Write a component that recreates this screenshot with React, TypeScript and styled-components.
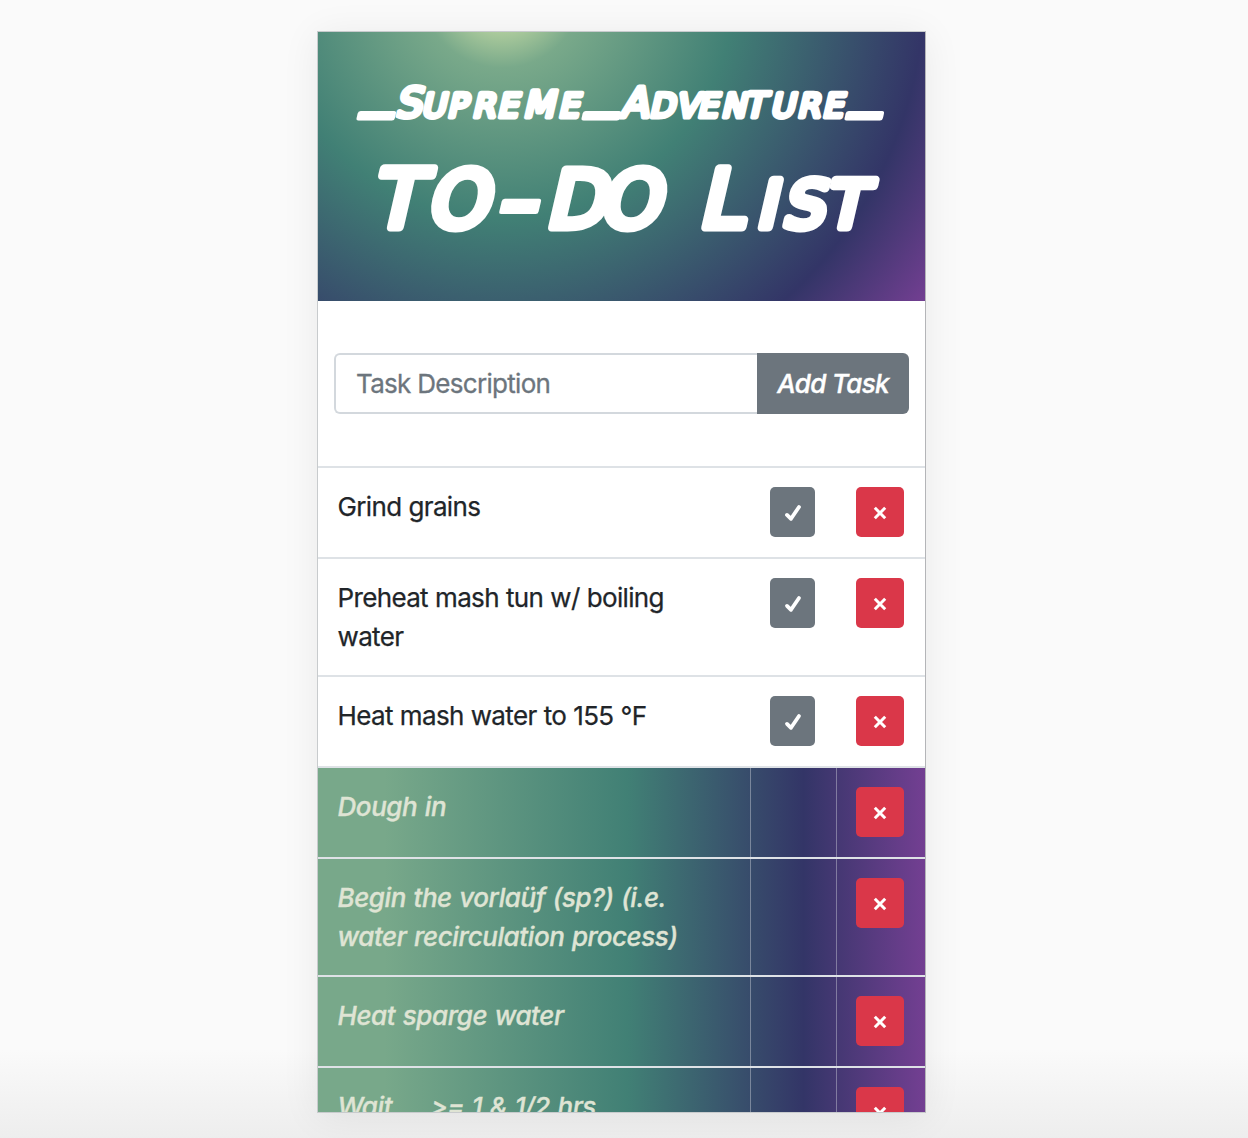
import React from "react";
import styled, { createGlobalStyle, css } from "styled-components";

const Global = createGlobalStyle`
  *, *::before, *::after { box-sizing: border-box; }
  html, body { margin: 0; padding: 0; height: 1138px; overflow: hidden; }
  body { background: #fafafa; font-family: Inter, "Liberation Sans", sans-serif; }
`;

const Page = styled.main`
  height: 1138px;
  padding: 31px 322px 25px 317px;
  background: linear-gradient(to bottom, rgba(236,236,236,0) 1050px, rgba(236,236,236,0.9) 1138px);
`;

const Card = styled.section`
  width: 609px;
  height: 1082px;
  overflow: hidden;
  background: #fff;
  border: 1px solid #c8cbcd;
  border-right-color: #b4b5b8;
  box-shadow: 0 4px 36px rgba(0, 0, 0, 0.07);
`;

const Header = styled.header`
  height: 269px;
  background: radial-gradient(circle 528px at 184px -46px, #ecf5b3 0, #79a98a 15.5%, #418075 44%, #333567 80%, #733f92 100%);
`;

const Wordmark = styled.svg`
  display: block;
  width: 607px;
  height: 269px;
  fill: #fff;
  stroke: #fff;
  stroke-linejoin: round;
  font-family: "DejaVu Sans", sans-serif;
  font-weight: 400;
`;

const Form = styled.form`
  display: flex;
  padding: 52px 16px;
  height: 165px;
`;

const TaskInput = styled.input`
  flex: 1;
  min-width: 0;
  height: 61px;
  padding: 0 20px;
  border: 2px solid #d3d8dd;
  border-right: 0;
  border-radius: 6px 0 0 6px;
  background: #fff;
  font: 400 26px Inter, sans-serif;
  letter-spacing: -0.7px;
  &::placeholder { color: #6c757d; opacity: 1; -webkit-text-stroke: 0.3px #6c757d; }
`;

const AddButton = styled.button`
  width: 152px;
  height: 61px;
  padding: 0;
  border: 0;
  border-radius: 0 6px 6px 0;
  background: #6c757d;
  color: #fff;
  font: italic 500 26px Inter, sans-serif;
  letter-spacing: -0.65px;
  -webkit-text-stroke: 0.4px #fff;
`;

const List = styled.ul`
  margin: 0;
  padding: 0;
  list-style: none;
`;

const Row = styled.li<{ $done: boolean; $tall: boolean }>`
  display: grid;
  grid-template-columns: 432px 86px 1fr;
  height: ${(p) => (p.$tall ? 118.3 : 90.75)}px;
  border-top: 2px solid #dee2e6;
  color: #212529;
  ${(p) =>
    p.$done &&
    css`
      color: #dfe4d4;
      font-style: italic;
      font-weight: 500;
      background: linear-gradient(to right, #78a88a 0, #78a88a 11%, #418075 51%, #333567 80%, #733f92 100%);
    `}
`;

const Label = styled.div<{ $done: boolean }>`
  padding: 19px 50px 0 19.5px;
  font-size: 26px;
  line-height: 39px;
  white-space: pre-wrap;
  letter-spacing: ${(p) => (p.$done ? -0.42 : -0.65)}px;
  word-spacing: ${(p) => (p.$done ? 1 : 0.4)}px;
  -webkit-text-stroke: ${(p) => (p.$done ? 0.35 : 0.25)}px currentColor;
`;

const Cell = styled.div<{ $done: boolean }>`
  padding: 19px 0 0 19px;
  border-left: 1px solid ${(p) => (p.$done ? "rgba(222,226,230,0.4)" : "transparent")};
`;

const IconButton = styled.button<{ $danger?: boolean }>`
  display: flex;
  align-items: center;
  justify-content: center;
  width: ${(p) => (p.$danger ? 48.4 : 45.4)}px;
  height: 50px;
  padding: 2px 0 0;
  border: 0;
  border-radius: 5px;
  background: ${(p) => (p.$danger ? "#da3749" : "#6c757d")};
`;

const Check = () => (
  <svg width="18" height="18" viewBox="0 0 18 18" fill="none" stroke="#fff" strokeWidth="3.8" strokeLinecap="round" strokeLinejoin="round">
    <path d="M3 10.9 7 14.8 15 3" />
  </svg>
);

const Cross = () => (
  <svg width="14" height="14" viewBox="0 0 14 14" fill="none" stroke="#fff" strokeWidth="3">
    <path d="M1.8 1.8 12.2 12.2M12.2 1.8 1.8 12.2" />
  </svg>
);

const tasks = [
  { lines: ["Grind grains"], done: false },
  { lines: ["Preheat mash tun w/ boiling", "water"], done: false },
  { lines: ["Heat mash water to 155 °F"], done: false },
  { lines: ["Dough in"], done: true },
  { lines: ["Begin the vorlaüf (sp?) (i.e.", "water recirculation process)"], done: true },
  { lines: ["Heat sparge water"], done: true },
  { lines: ["Wait __ >= 1 & 1/2 hrs"], done: true },
];

export default function App() {
  return (
    <>
      <Global />
      <Page>
        <Card>
          <Header>
            <Wordmark role="img" aria-label="Supreme Adventure to-do list">
              <text transform="translate(0 84.5) skewX(-13)" fontSize="32.5" strokeWidth="5">
                <tspan x="42" fontSize="64" y="-14">_</tspan>
                <tspan x="77" fontSize="41" y="0">S</tspan>
                <tspan x="103 129 154 179" y="0">UPRE</tspan>
                <tspan x="205" fontSize="36">M</tspan>
                <tspan x="240">E</tspan>
                <tspan x="267" fontSize="64" y="-14">_</tspan>
                <tspan x="302" fontSize="41" y="0">A</tspan>
                <tspan x="331 358 379 403" y="0">DVEN</tspan>
                <tspan x="426" fontSize="34">T</tspan>
                <tspan x="452 479 504">URE</tspan>
                <tspan x="530" fontSize="64" y="-14">_</tspan>
              </text>
              <text transform="translate(0 195) skewX(-13)" y="0" fontSize="78" strokeWidth="9">
                <tspan x="53" fontSize="80">T</tspan>
                <tspan x="108">O</tspan>
                <tspan x="174" y="15" fontSize="130" strokeWidth="5">-</tspan>
                <tspan x="227 280" y="0">DO</tspan>
                <tspan x="350 380" fontSize="80"> L</tspan>
                <tspan x="438 464 507" fontSize="64">IST</tspan>
              </text>
            </Wordmark>
          </Header>
          <Form onSubmit={(e) => e.preventDefault()}>
            <TaskInput placeholder="Task Description" />
            <AddButton type="submit">Add Task</AddButton>
          </Form>
          <List>
            {tasks.map(({ lines, done }) => (
              <Row key={lines[0]} $done={done} $tall={lines.length > 1}>
                <Label $done={done}>{lines.join("\n")}</Label>
                <Cell $done={done}>
                  {!done && (
                    <IconButton aria-label="Complete"><Check /></IconButton>
                  )}
                </Cell>
                <Cell $done={done}>
                  <IconButton $danger aria-label="Delete"><Cross /></IconButton>
                </Cell>
              </Row>
            ))}
          </List>
        </Card>
      </Page>
    </>
  );
}
